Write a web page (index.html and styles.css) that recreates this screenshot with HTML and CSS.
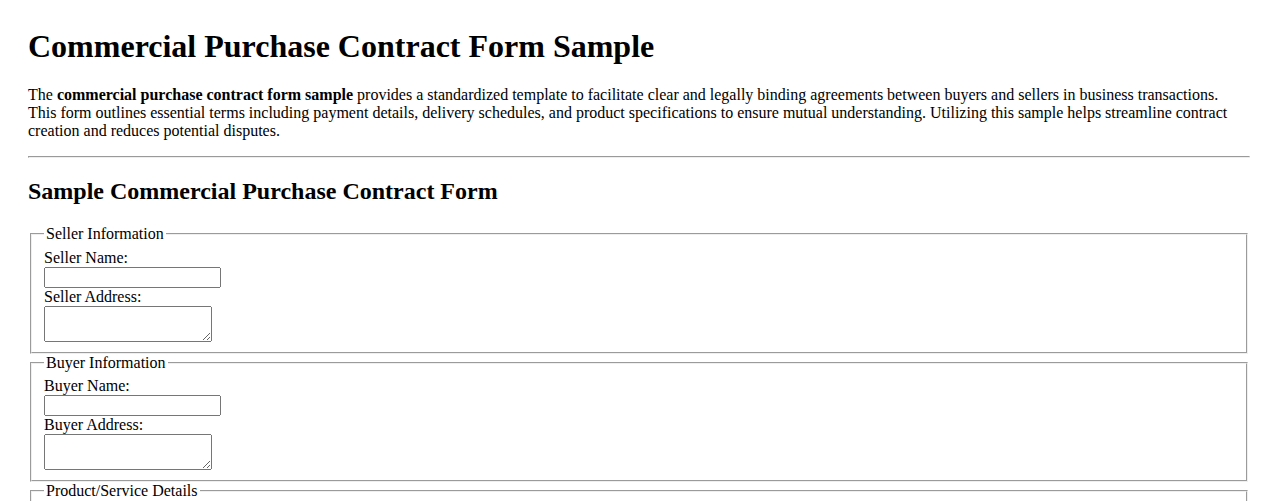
FILE: index.html
```html
<!DOCTYPE html>
<html lang="en">
<head>
<meta charset="utf-8">
<title>Commercial Purchase Contract Form Sample</title>
<link rel="stylesheet" href="styles.css">
</head>
<body>
<h1 class="title">Commercial Purchase Contract Form Sample</h1>
<p class="intro">The <strong>commercial purchase contract form sample</strong> provides a standardized template to facilitate clear and legally binding agreements between buyers and sellers in business transactions. This form outlines essential terms including payment details, delivery schedules, and product specifications to ensure mutual understanding. Utilizing this sample helps streamline contract creation and reduces potential disputes.</p>
<hr class="divider">
<h2 class="subtitle">Sample Commercial Purchase Contract Form</h2>
<form class="contract">
  <fieldset class="group">
    <legend>Seller Information</legend>
    <label for="sellerName">Seller Name:</label><br>
    <input type="text" id="sellerName" class="field"><br>
    <label for="sellerAddress">Seller Address:</label><br>
    <textarea id="sellerAddress" class="area"></textarea>
  </fieldset>
  <fieldset class="group">
    <legend>Buyer Information</legend>
    <label for="buyerName">Buyer Name:</label><br>
    <input type="text" id="buyerName" class="field"><br>
    <label for="buyerAddress">Buyer Address:</label><br>
    <textarea id="buyerAddress" class="area"></textarea>
  </fieldset>
  <fieldset class="group">
    <legend>Product/Service Details</legend>
    <label for="description">Description:</label><br>
    <textarea id="description" class="area"></textarea><br>
    <label for="quantity">Quantity:</label><br>
    <input type="number" id="quantity" class="field"><br>
    <label for="price">Unit Price:</label><br>
    <input type="text" id="price" class="field">
  </fieldset>
</form>
</body>
</html>
```
FILE: styles.css
```css
body {
  margin: 8px;
  padding: 20px;
  font-family: "Liberation Serif", "Times New Roman", serif;
  font-size: 16px;
  color: #000;
  background: #fff;
}
.title {
  font-size: 32px;
  margin: 0 0 21.44px;
}
.intro {
  margin: 16px 0;
}
.divider {
  margin: 16px 0;
}
.subtitle {
  font-size: 24px;
  margin: 19.92px 0;
}
.group {
  margin: 0 2px;
}
.field {
  box-sizing: border-box;
  width: 177px;
  height: 21px;
  vertical-align: top;
  font-family: "Liberation Sans", Arial, sans-serif;
}
.area {
  box-sizing: border-box;
  width: 168px;
  height: 36px;
  vertical-align: top;
  font-family: "Liberation Mono", "Courier New", monospace;
}
```
